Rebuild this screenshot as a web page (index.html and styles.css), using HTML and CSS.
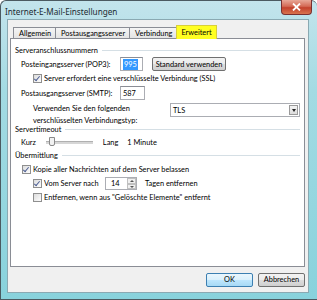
FILE: index.html
```html
<!DOCTYPE html>
<html lang="de">
<head>
  <meta charset="UTF-8">
  <title>Internet-E-Mail-Einstellungen</title>
  <link rel="stylesheet" href="styles.css">
</head>
<body>

  <div class="window">
    <!-- Titelleiste -->
    <div class="titlebar">
      <span class="title">Internet-E-Mail-Einstellungen</span>
      <span class="close">
        <svg width="9" height="8" viewBox="0 0 9 8"><path d="M1 0.5 L8 7.5 M8 0.5 L1 7.5" stroke="#fff" stroke-width="1.8"/></svg>
      </span>
    </div>

    <div class="client">
      <!-- Registerkarten -->
      <div class="tabs">
        <span class="tab">Allgemein</span>
        <span class="tab">Postausgangsserver</span>
        <span class="tab">Verbindung</span>
        <span class="tab active">Erweitert</span>
      </div>

      <div class="panel">
        <div class="group-head"><span>Serveranschlussnummern</span></div>

        <div class="row row-pop">
          <span class="label">Posteingangsserver (POP3):</span>
          <span class="field field-pop"><span class="selected">995</span></span>
          <span class="btn btn-default">Standard verwenden</span>
        </div>

        <div class="row row-ssl indent">
          <span class="check on"></span>
          <span>Server erfordert eine verschlüsselte Verbindung (SSL)</span>
        </div>

        <div class="row row-smtp">
          <span class="label">Postausgangsserver (SMTP):</span>
          <span class="field field-smtp">587</span>
        </div>

        <div class="row row-type indent">
          <span class="type-text">Verwenden Sie den folgenden<br>verschlüsselten Verbindungstyp:</span>
          <span class="select">
            <span class="select-value">TLS</span>
            <span class="select-arrow"></span>
          </span>
        </div>

        <div class="group-head head-small"><span>Servertimeout</span></div>

        <div class="row row-slider">
          <span>Kurz</span>
          <span class="slider"><span class="thumb"></span></span>
          <span class="lang">Lang</span>
          <span class="minute">1 Minute</span>
        </div>

        <div class="group-head head-small"><span>Übermittlung</span></div>

        <div class="row row-cb1">
          <span class="check on"></span>
          <span>Kopie aller Nachrichten auf dem Server belassen</span>
        </div>

        <div class="row row-cb indent">
          <span class="check on"></span>
          <span class="cb-label">Vom Server nach</span>
          <span class="spinner">
            <span class="spin-value">14</span>
            <span class="spin-buttons"><span class="spin-up"></span><span class="spin-down"></span></span>
          </span>
          <span class="days">Tagen entfernen</span>
        </div>

        <div class="row row-cb indent">
          <span class="check"></span>
          <span>Entfernen, wenn aus "Gelöschte Elemente" entfernt</span>
        </div>
      </div>

      <!-- Schaltflächen -->
      <div class="footer">
        <span class="btn btn-ok">OK</span>
        <span class="btn btn-cancel">Abbrechen</span>
      </div>
    </div>
  </div>

</body>
</html>
```

FILE: styles.css
```css
/* ===== General ===== */
body {
  margin: 0;
  padding: 0;
  background: #ffffff;
  font-family: 'Lato', 'Noto Sans', sans-serif;
  font-size: 7.4px;
  color: #000000;
}

.window {
  width: 317px;
  height: 300px;
  box-sizing: border-box;
  border: 1px solid #4b5a61;
  border-right: none;
  border-radius: 6px 6px 0 0;
  background: linear-gradient(#c3e4ec, #a3dbe3 30%, #88d2dc);
  padding: 0 8px 6px 6px;
  display: flex;
  flex-direction: column;
}

/* ===== Title bar ===== */
.titlebar {
  height: 18px;
  display: flex;
  align-items: center;
  position: relative;
}

.title {
  margin-left: -2px;
  padding-top: 2px;
  font-family: 'Noto Sans', sans-serif;
  font-size: 8.2px;
  color: #1b2a30;
}

.close {
  position: absolute;
  top: -1px;
  right: -3px;
  width: 31px;
  height: 15px;
  box-sizing: border-box;
  border: 1px solid #7a3030;
  border-top: none;
  border-radius: 0 0 4px 4px;
  background: linear-gradient(#e8a898, #d46a55 45%, #c3412c 55%, #d9744f);
  display: flex;
  justify-content: center;
  align-items: center;
}

/* ===== Client area ===== */
.client {
  flex: 1;
  background: #f0f0f0;
  border: 1px solid #8aa9b2;
  display: flex;
  flex-direction: column;
  padding: 0 3px 0 2px;
}

.tabs {
  display: flex;
  align-items: flex-end;
  height: 19px;
  padding-left: 3px;
  margin-bottom: -1px;
}

.tab {
  height: 11px;
  line-height: 11px;
  padding: 0 4px 0 5px;
  border: 1px solid #8a8d95;
  border-bottom: none;
  margin-right: -1px;
  background: linear-gradient(#f5f5f5, #e2e2e2);
}

.tab.active {
  height: 13px;
  line-height: 14px;
  padding: 0 4px;
  background: #ffff22;
  border: 1px solid #d8cf3a;
  border-bottom: none;
  position: relative;
  z-index: 1;
}

.panel {
  height: 229px;
  box-sizing: border-box;
  background: #ffffff;
  border: 1px solid #8a8d95;
  padding: 5px 4px 0 4px;
}

/* ===== Group headers ===== */
.group-head {
  height: 12px;
  display: flex;
  align-items: center;
}

.group-head::after {
  content: "";
  flex: 1;
  height: 1px;
  background: #d5dfe5;
  margin-left: 4px;
}

.head-small {
  height: 8px;
}

/* ===== Rows ===== */
.row {
  display: flex;
  align-items: center;
  padding-left: 6px;
  white-space: nowrap;
}

.row.indent {
  padding-left: 18px;
}

.label {
  width: 99px;
}

.row-pop {
  height: 14px;
  margin-top: 1px;
}

.row-ssl {
  height: 14px;
}

.row-smtp {
  height: 16px;
}

.row-type {
  height: 24px;
  align-items: flex-start;
}

.row-slider {
  height: 18px;
}

.row-cb1 {
  height: 14px;
  margin-top: 3px;
  padding-left: 7px;
}

.row-cb {
  height: 14px;
}

/* ===== Fields ===== */
.field {
  height: 14px;
  box-sizing: border-box;
  border: 1px solid #abadb3;
  border-top-color: #8a8d95;
  background: #ffffff;
  display: flex;
  align-items: center;
  padding-left: 2px;
}

.field-pop {
  width: 23px;
}

.field-smtp {
  width: 25px;
}

.selected {
  background: #3399ff;
  color: #ffffff;
  padding: 0 1px;
  line-height: 11px;
}

.btn {
  height: 14px;
  flex-shrink: 0;
  box-sizing: border-box;
  border: 1px solid #707070;
  border-radius: 2px;
  background: linear-gradient(#f2f2f2, #ebebeb 50%, #dddddd 50%, #cfcfcf);
  display: flex;
  justify-content: center;
  align-items: center;
}

.btn-default {
  width: 74px;
  margin-left: 9px;
}

/* ===== Checkbox ===== */
.check {
  width: 9px;
  height: 9px;
  flex-shrink: 0;
  box-sizing: border-box;
  border: 1px solid #8f8f8f;
  background: linear-gradient(135deg, #dcdcdc, #fdfdfd);
  margin-right: 2px;
  position: relative;
}

.check.on::after {
  content: "";
  position: absolute;
  left: 1px;
  top: 0px;
  width: 2px;
  height: 5px;
  border: solid #4d5f94;
  border-width: 0 1.5px 1.5px 0;
  transform: rotate(40deg);
  transform-origin: 60% 60%;
}

/* ===== Connection type ===== */
.type-text {
  width: 137px;
  line-height: 12px;
  padding-top: 2px;
}

.select {
  width: 130px;
  height: 14px;
  box-sizing: border-box;
  margin-top: 2px;
  border: 1px solid #abadb3;
  background: #ffffff;
  display: flex;
  align-items: center;
}

.select-value {
  flex: 1;
  padding-left: 2px;
}

.select-arrow {
  width: 9px;
  height: 10px;
  margin-right: 1px;
  border: 1px solid #9a9a9a;
  box-sizing: border-box;
  background: linear-gradient(#f4f4f4, #dcdcdc);
  position: relative;
}

.select-arrow::after {
  content: "";
  position: absolute;
  left: 1.5px;
  top: 3px;
  border-left: 2.5px solid transparent;
  border-right: 2.5px solid transparent;
  border-top: 3px solid #222;
}

/* ===== Slider ===== */
.slider {
  width: 47px;
  height: 2px;
  margin-left: 10px;
  background: #d6d6d6;
  border-top: 1px solid #b0b0b0;
  position: relative;
}

.thumb {
  position: absolute;
  left: 3px;
  top: -5px;
  width: 4px;
  height: 7px;
  border: 1px solid #8a8a8a;
  border-radius: 0 0 2px 2px;
  background: #f2f2f2;
}

.lang {
  margin-left: 10px;
}

.minute {
  margin-left: 9px;
}

/* ===== Spinner ===== */
.cb-label {
  width: 61px;
}

.spinner {
  width: 32px;
  height: 13px;
  box-sizing: border-box;
  border: 1px solid #abadb3;
  background: #ffffff;
  display: flex;
  margin-top: 1px;
}

.spin-value {
  flex: 1;
  padding-left: 5px;
  line-height: 11px;
}

.spin-buttons {
  width: 9px;
  display: flex;
  flex-direction: column;
}

.spin-up, .spin-down {
  flex: 1;
  border: 1px solid #c0c0c0;
  background: #f0f0f0;
  position: relative;
}

.spin-up::after, .spin-down::after {
  content: "";
  position: absolute;
  left: 2px;
  top: 1px;
  border-left: 2px solid transparent;
  border-right: 2px solid transparent;
}

.spin-up::after {
  border-bottom: 2px solid #555;
}

.spin-down::after {
  border-top: 2px solid #555;
}

.days {
  margin-left: 8px;
}

/* ===== Footer ===== */
.footer {
  flex: 1;
  display: flex;
  justify-content: flex-end;
  align-items: center;
  gap: 5px;
}

.btn-ok {
  width: 47px;
  border-color: #3c7fb1;
  background: linear-gradient(#eaf6fd, #d9f0fc 50%, #bee6fd 50%, #a7d9f5);
}

.btn-cancel {
  width: 47px;
}
```
